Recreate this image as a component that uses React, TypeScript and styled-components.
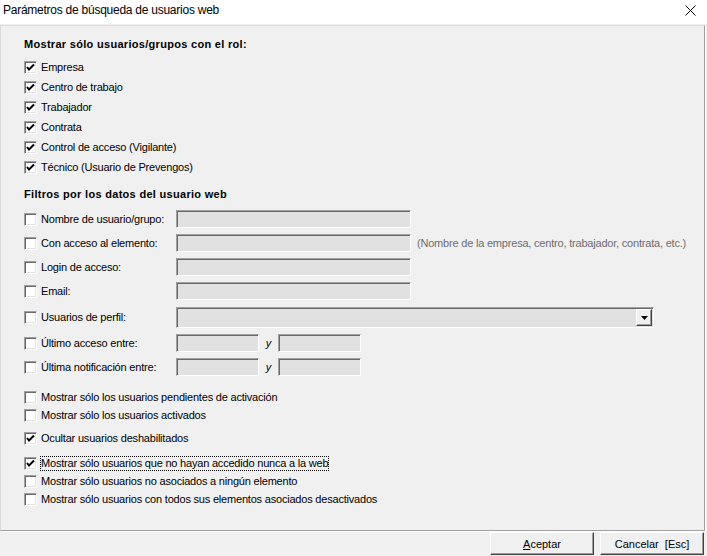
import React from 'react';
import styled, { createGlobalStyle } from 'styled-components';

const GlobalStyle = createGlobalStyle`
	html, body {
		margin: 0;
		padding: 0;
		background: #f0f0f0;
	}
	body {
		font-family: "Liberation Sans", Arial, sans-serif;
		font-size: 11px;
		color: #000;
	}
`;

const roles = [
	'Empresa',
	'Centro de trabajo',
	'Trabajador',
	'Contrata',
	'Control de acceso (Vigilante)',
	'Técnico (Usuario de Prevengos)',
];

const textFilters = [
	{ label: 'Nombre de usuario/grupo:', hint: '' },
	{ label: 'Con acceso al elemento:', hint: '(Nombre de la empresa, centro, trabajador, contrata, etc.)' },
	{ label: 'Login de acceso:', hint: '' },
	{ label: 'Email:', hint: '' },
];

const Check = ({ checked }: { checked?: boolean }) => (
	<CheckBox>
		{checked && (
			<svg width='9' height='9' viewBox='0 0 9 9'>
				<path d='M1 4 L3 6.5 L8 1.5' fill='none' stroke='#000' strokeWidth='2' />
			</svg>
		)}
	</CheckBox>
);

export default function App() {
	return (
		<Window>
			<GlobalStyle />
			<TitleBar>
				<Title>Parámetros de búsqueda de usuarios web</Title>
				<Close>
					<svg width='11' height='11' viewBox='0 0 11 11'>
						<path d='M0.5 0.5 L10.5 10.5 M10.5 0.5 L0.5 10.5' stroke='#000' strokeWidth='1' />
					</svg>
				</Close>
			</TitleBar>

			<Panel>
				<SectionTitle top={0}>Mostrar sólo usuarios/grupos con el rol:</SectionTitle>
				<Group top={6}>
					{roles.map((r) => (
						<CheckRow key={r} h={20}>
							<Check checked />
							<Label>{r}</Label>
						</CheckRow>
					))}
				</Group>

				<SectionTitle top={10}>Filtros por los datos del usuario web</SectionTitle>
				<Group top={6}>
					{textFilters.map((f) => (
						<FieldRow key={f.label} h={24}>
							<FieldLabel>
								<Check />
								<Label>{f.label}</Label>
							</FieldLabel>
							<TextBox w={235} />
							{f.hint && <Hint>{f.hint}</Hint>}
						</FieldRow>
					))}
					<FieldRow h={28}>
						<FieldLabel>
							<Check />
							<Label>Usuarios de perfil:</Label>
						</FieldLabel>
						<Combo>
							<ComboArrow>
								<svg width='7' height='4' viewBox='0 0 7 4'>
									<path d='M0 0 H7 L3.5 4 Z' fill='#000' />
								</svg>
							</ComboArrow>
						</Combo>
					</FieldRow>
					<FieldRow h={24}>
						<FieldLabel>
							<Check />
							<Label>Último acceso entre:</Label>
						</FieldLabel>
						<TextBox w={83} />
						<DateSep>y</DateSep>
						<TextBox w={83} />
					</FieldRow>
					<FieldRow h={24}>
						<FieldLabel>
							<Check />
							<Label>Última notificación entre:</Label>
						</FieldLabel>
						<TextBox w={83} />
						<DateSep>y</DateSep>
						<TextBox w={83} />
					</FieldRow>
				</Group>

				<Group top={9}>
					<CheckRow h={18}>
						<Check />
						<Label>Mostrar sólo los usuarios pendientes de activación</Label>
					</CheckRow>
					<CheckRow h={18}>
						<Check />
						<Label>Mostrar sólo los usuarios activados</Label>
					</CheckRow>
				</Group>

				<Group top={5}>
					<CheckRow h={18}>
						<Check checked />
						<Label>Ocultar usuarios deshabilitados</Label>
					</CheckRow>
				</Group>

				<Group top={7}>
					<CheckRow h={18}>
						<Check checked />
						<Label focused>Mostrar sólo usuarios que no hayan accedido nunca a la web</Label>
					</CheckRow>
					<CheckRow h={18}>
						<Check />
						<Label>Mostrar sólo usuarios no asociados a ningún elemento</Label>
					</CheckRow>
					<CheckRow h={18}>
						<Check />
						<Label>Mostrar sólo usuarios con todos sus elementos asociados desactivados</Label>
					</CheckRow>
				</Group>
			</Panel>

			<Footer>
				<Button>
					<u>A</u>ceptar
				</Button>
				<Button>Cancelar&nbsp;&nbsp;[Esc]</Button>
			</Footer>
		</Window>
	);
}

const Window = styled.div`
	width: 707px;
	height: 556px;
	display: flex;
	flex-direction: column;
	background: #f0f0f0;
	overflow: hidden;
`;

const TitleBar = styled.div`
	flex: none;
	height: 24px;
	box-sizing: border-box;
	background: #fff;
	display: flex;
	align-items: flex-start;
	justify-content: space-between;
	padding: 3px 11px 0 3px;
`;

const Title = styled.span`
	font-size: 12px;
	line-height: 14px;
	letter-spacing: -0.25px;
`;

const Close = styled.span`
	display: flex;
	padding-top: 2px;
`;

const Panel = styled.div`
	flex: none;
	width: 705px;
	height: 506px;
	box-sizing: border-box;
	border: 1px solid;
	border-color: #dadada #a0a0a0 #a0a0a0 #dadada;
	box-shadow: 1px 1px 0 #fff;
	padding: 11px 0 0 23px;
	display: flex;
	flex-direction: column;
	margin-top: 1px;
`;

const SectionTitle = styled.div<{ top: number }>`
	margin-top: ${(p) => p.top}px;
	height: 14px;
	line-height: 14px;
	font-weight: bold;
	font-size: 11px;
	letter-spacing: 0.3px;
`;

const Group = styled.div<{ top: number }>`
	margin-top: ${(p) => p.top}px;
	display: flex;
	flex-direction: column;
`;

const CheckRow = styled.div<{ h: number }>`
	height: ${(p) => p.h}px;
	display: flex;
	align-items: center;
	gap: 4px;
`;

const FieldRow = styled.div<{ h: number }>`
	height: ${(p) => p.h}px;
	display: flex;
	align-items: center;
`;

const FieldLabel = styled.div`
	width: 152px;
	display: flex;
	align-items: center;
	gap: 4px;
`;

const CheckBox = styled.span`
	width: 13px;
	height: 13px;
	box-sizing: border-box;
	flex: none;
	background: #fff;
	border: 1px solid;
	border-color: #a0a0a0 #fff #fff #a0a0a0;
	box-shadow: inset 1px 1px 0 #696969, inset -1px -1px 0 #e3e3e3;
	display: flex;
	align-items: center;
	justify-content: center;
`;

const Label = styled.span<{ focused?: boolean }>`
	white-space: nowrap;
	line-height: 13px;
	letter-spacing: -0.2px;
	outline: ${(p) => (p.focused ? '1px dotted #000' : 'none')};
	outline-offset: 0;
`;

const TextBox = styled.div<{ w: number }>`
	width: ${(p) => p.w}px;
	height: 18px;
	box-sizing: border-box;
	background: #e1e1e1;
	border: 1px solid;
	border-color: #a0a0a0 #fff #fff #a0a0a0;
	box-shadow: inset 1px 1px 0 #696969;
`;

const Hint = styled.span`
	margin-left: 6px;
	color: #6d6d6d;
	white-space: nowrap;
	letter-spacing: -0.2px;
`;

const DateSep = styled.span`
	width: 19px;
	text-align: center;
	font-style: italic;
`;

const Combo = styled.div`
	width: 478px;
	height: 21px;
	box-sizing: border-box;
	background: #e1e1e1;
	border: 1px solid;
	border-color: #a0a0a0 #fff #fff #a0a0a0;
	box-shadow: inset 1px 1px 0 #696969;
	display: flex;
	justify-content: flex-end;
	align-items: center;
	padding: 1px 1px 0 0;
`;

const ComboArrow = styled.div`
	width: 16px;
	height: 17px;
	box-sizing: border-box;
	background: #f0f0f0;
	border: 1px solid;
	border-color: #fff #404040 #404040 #fff;
	box-shadow: inset -1px -1px 0 #a0a0a0;
	display: flex;
	align-items: center;
	justify-content: center;
`;

const Footer = styled.div`
	flex: 1;
	display: flex;
	justify-content: flex-end;
	align-items: flex-start;
	gap: 6px;
	padding: 1px 3px 0 0;
`;

const Button = styled.div`
	width: 104px;
	height: 23px;
	box-sizing: border-box;
	background: #f0f0f0;
	border: 1px solid;
	border-color: #fff #404040 #404040 #fff;
	box-shadow: inset -1px -1px 0 #a0a0a0;
	display: flex;
	align-items: center;
	justify-content: center;
	font-size: 11px;
`;
